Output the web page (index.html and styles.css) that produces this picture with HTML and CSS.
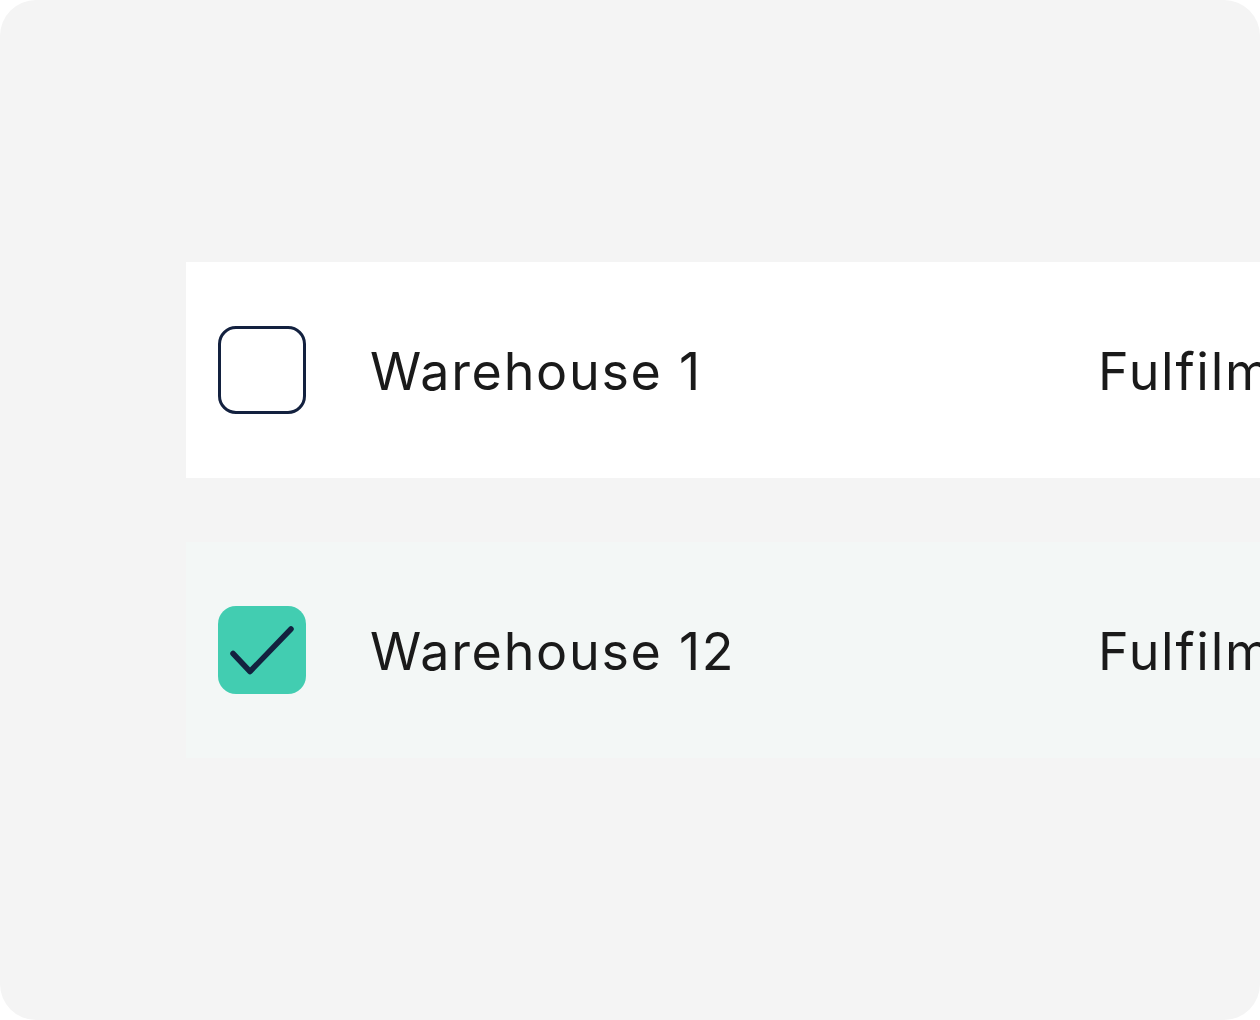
FILE: index.html
```html
<!DOCTYPE html>
<html lang="en">
<head>
<meta charset="utf-8">
<title>Warehouses</title>
<link rel="stylesheet" href="styles.css">
</head>
<body>
<div class="panel">
  <div class="list">
    <div class="row">
      <span class="check"></span>
      <span class="name">Warehouse 1</span>
      <span class="type">Fulfilment</span>
    </div>
    <div class="row row-selected">
      <span class="check check-on">
        <svg viewBox="0 0 88 88" width="88" height="88"><path d="M15 47.5 L32 65.5 L73 23" fill="none" stroke="#13213f" stroke-width="5.5" stroke-linecap="round" stroke-linejoin="round"/></svg>
      </span>
      <span class="name">Warehouse 12</span>
      <span class="type">Fulfilment</span>
    </div>
  </div>
</div>
</body>
</html>
```
FILE: styles.css
```css
html, body {
  margin: 0;
  padding: 0;
  background: #ffffff;
}
.panel {
  width: 1260px;
  height: 1020px;
  background: #f4f4f4;
  border-radius: 36px;
  overflow: hidden;
  box-sizing: border-box;
  padding: 262px 0 0 186px;
}
.list {
  display: flex;
  flex-direction: column;
  gap: 64px;
  width: 1400px;
}
.row {
  height: 216px;
  box-sizing: border-box;
  padding-left: 32px;
  background: #ffffff;
  display: grid;
  grid-template-columns: 88px 664px auto;
  column-gap: 64px;
  align-items: center;
  font-family: Inter, "Liberation Sans", sans-serif;
  font-size: 52px;
  letter-spacing: 1.7px;
  color: #1a1a1a;
}
.row-selected {
  background: #f3f7f6;
}
.check {
  width: 88px;
  height: 88px;
  box-sizing: border-box;
  border: 3.5px solid #13213f;
  border-radius: 18px;
  display: block;
}
.check-on {
  border: none;
  background: #42cdb1;
}
.check-on svg {
  display: block;
}
.name, .type {
  white-space: nowrap;
  line-height: 1;
  padding-top: 4px;
}
```
